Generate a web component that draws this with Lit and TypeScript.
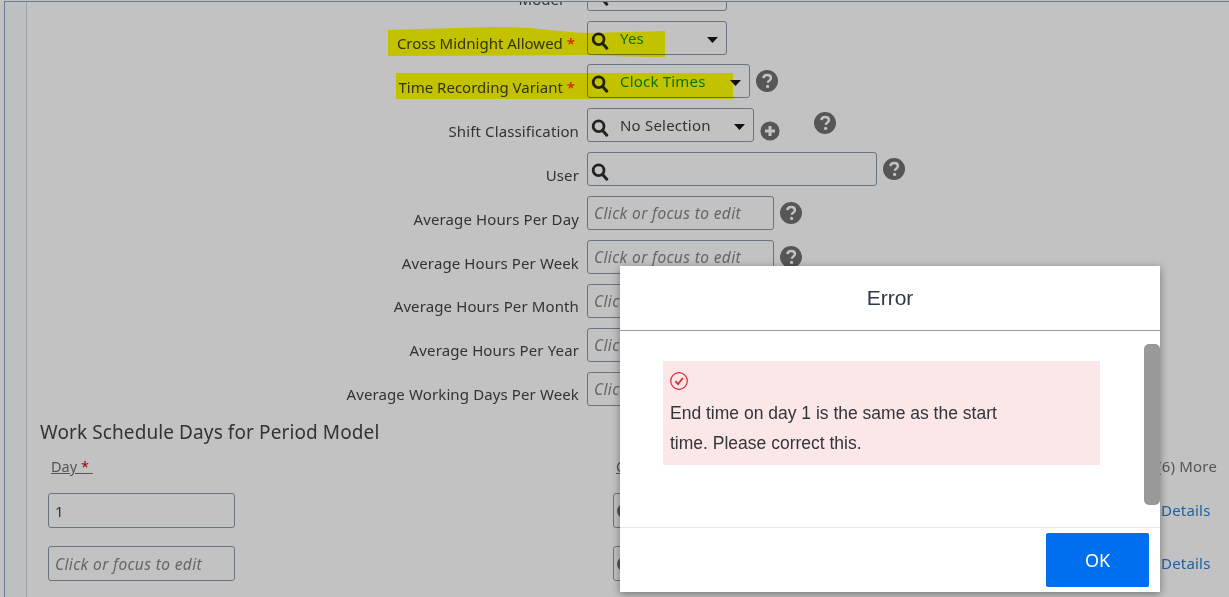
import { LitElement, html, css, svg } from "lit";
import { customElement } from "lit/decorators.js";

const search = html`<svg class="search" width="18" height="18" viewBox="0 0 18 18"><circle cx="7.6" cy="7.2" r="5.4" fill="none" stroke="#222" stroke-width="2.8"/><path d="M11.4 11.2l4.4 5" stroke="#222" stroke-width="3" stroke-linecap="round"/></svg>`;
const arrow = html`<svg class="arrow" width="11" height="6" viewBox="0 0 11 6"><path d="M0 0h11L5.5 6z" fill="#111"/></svg>`;
const help = html`<svg width="22" height="22" viewBox="0 0 22 22"><circle cx="11" cy="11" r="11" fill="#565656"/><path d="M7.4 8.2c.2-2.2 1.8-3.3 3.8-3.3 2.2 0 3.7 1.2 3.7 3 0 1.4-.8 2.1-1.8 2.8-.9.6-1.3 1-1.3 2" fill="none" stroke="#c2c2c2" stroke-width="2.5"/><circle cx="11.6" cy="16.4" r="1.6" fill="#c2c2c2"/></svg>`;
const plus = html`<svg width="20" height="20" viewBox="0 0 20 20"><circle cx="10" cy="10" r="9.6" fill="#565656"/><path d="M10 5v10M5 10h10" stroke="#c2c2c2" stroke-width="3"/></svg>`;

interface Row {
  label: string;
  req?: boolean;
  value?: string;
  width: number;
  select?: boolean;
  search?: boolean;
  green?: boolean;
  help?: boolean;
}

const rows: Row[] = [
  { label: "Model", req: true, width: 140, search: true },
  { label: "Cross Midnight Allowed", req: true, value: "Yes", width: 140, select: true, search: true, green: true },
  { label: "Time Recording Variant", req: true, value: "Clock Times", width: 163, select: true, search: true, green: true, help: true },
  { label: "Shift Classification", value: "No Selection", width: 167, select: true, search: true },
  { label: "User", width: 290, search: true, help: true },
  { label: "Average Hours Per Day", width: 187, help: true },
  { label: "Average Hours Per Week", width: 187, help: true },
  { label: "Average Hours Per Month", width: 187 },
  { label: "Average Hours Per Year", width: 187 },
  { label: "Average Working Days Per Week", width: 187 },
];

@customElement("app-root")
export class AppRoot extends LitElement {
  static styles = css`
    :host { display: block; width: 1229px; height: 597px; overflow: hidden; background: #c2c2c2; position: relative; font-family: "Noto Sans", sans-serif; color: #333; }
    .frame { margin: 1px 0 0 4px; height: 596px; box-sizing: border-box; border-top: 1px solid #6b7b8e; border-left: 1px solid #6b7b8e; display: flex; overflow: hidden; }
    .band { width: 21px; flex: none; background: #bcc0c0; border-right: 1px solid #a0a4a4; }
    .main { flex: 1; padding-left: 13px; }
    .form { margin: -25px 0 0 0; display: flex; flex-direction: column; gap: 10px; }
    .row { display: flex; height: 34px; align-items: flex-start; }
    .r1 { margin-bottom: -1px; }
    .label { width: 539px; flex: none; text-align: right; font-size: 15px; line-height: 20px; padding-top: 12px; box-sizing: border-box; white-space: nowrap; letter-spacing: 0.12px; }
    .req .label { padding-right: 4px; letter-spacing: 0; }
    .r2 .label, .r3 .label, .r4 .label, .r5 .label, .r6 .label { padding-top: 13px; }
    .star { color: #d80f0f; }
    .box { margin-left: 8px; height: 34px; box-sizing: border-box; border: 1px solid #6a7480; border-radius: 3px; display: flex; align-items: center; flex: none; position: relative; }
    .search { position: absolute; left: 3px; top: 10px; }
    .arrow { position: absolute; right: 8px; top: 15px; }
    .value { margin-left: 32px; font-size: 15px; margin-top: -1px; letter-spacing: 0.2px; }
    .green { color: #0d6f00; }
    .ph { margin-left: 6px; font-size: 15.5px; font-style: italic; color: #666; white-space: nowrap; letter-spacing: 0.37px; }
    .ico { margin-left: 6px; flex: none; display: flex; }
    .r2 .ico { margin: 6px 0 0 6px; }
    .r3 .ico1 { margin: 13px 0 0 6px; }
    .r3 .ico2 { margin: 4px 0 0 34px; }
    .r4 .ico { margin: 6px 0 0 6px; }
    .r5 .ico, .r6 .ico { margin: 6px 0 0 6px; }
    h2 { margin: 14px 0 0; font-size: 19px; line-height: 24px; font-weight: 400; letter-spacing: 0.1px; }
    .table { display: grid; grid-template-columns: 565px 548px 60px; margin: 12px 0 0 8px; row-gap: 18px; align-items: center; }
    .th { font-size: 14.5px; line-height: 20px; color: #555; height: 26px; margin-bottom: -7px; }
    .th u { margin-left: 3px; }
    .th u b { color: #8b0000; font-weight: 400; }
    .more { margin-left: -4px; white-space: nowrap; font-size: 15px; letter-spacing: 0.2px; color: #555; }
    .cell { width: 187px; height: 35px; box-sizing: border-box; border: 1px solid #6a7480; border-radius: 3px; display: flex; align-items: center; padding-left: 6px; font-size: 15px; }
    .cell .ph { margin: 0; }
    .cell2 { width: 100px; padding-left: 3px; }
    .dot { width: 14px; height: 14px; border-radius: 50%; background: #565656; }
    .link { color: #1f5fa8; font-size: 15px; letter-spacing: 0.2px; margin-top: -1px; }
    .hl { position: absolute; left: 0; top: 0; mix-blend-mode: multiply; pointer-events: none; }
    .modal { position: absolute; left: 620px; top: 266px; width: 540px; height: 326px; background: #fff; box-shadow: 0 2px 8px rgba(0,0,0,.4); display: flex; flex-direction: column; font-family: "Liberation Sans", Arial, sans-serif; color: #32363a; }
    .mhead { height: 65px; flex: none; box-sizing: border-box; border-bottom: 1px solid #999; display: flex; align-items: center; justify-content: center; font-size: 21px; color: #2c3a46; }
    .mbody { flex: 1; position: relative; padding: 30px 0 0 43px; }
    .msg { width: 437px; height: 104px; box-sizing: border-box; background: #fbe6e8; padding: 11px 7px; font-size: 17.5px; line-height: 30px; }
    .msg svg { display: block; margin-bottom: 8px; }
    .scroll { position: absolute; right: 0; top: 13px; width: 16px; height: 161px; border-radius: 5px; background: #999; }
    .mfoot { height: 65px; flex: none; box-sizing: border-box; border-top: 1px solid #e8e8e8; display: flex; justify-content: flex-end; padding: 5px 11px 5px 0; }
    .ok { width: 103px; height: 54px; border-radius: 2px; background: #006fef; color: #fff; display: flex; align-items: center; justify-content: center; font: 18px "Noto Sans", sans-serif; }
  `;

  private renderRow(r: Row, i: number) {
    return html`<div class="row r${i} ${r.req ? "req" : ""}">
      <div class="label">${r.label}${r.req ? html` <span class="star">*</span>` : ""}</div>
      <div class="box" style="width:${r.width}px">
        ${r.search ? search : ""}
        ${r.value ? html`<span class="value ${r.green ? "green" : ""}">${r.value}</span>` : ""}
        ${!r.search ? html`<span class="ph">Click or focus to edit</span>` : ""}
        ${r.select ? arrow : ""}
      </div>
      ${i === 3
        ? html`<span class="ico ico1">${plus}</span><span class="ico ico2">${help}</span>`
        : r.help
          ? html`<span class="ico">${help}</span>`
          : ""}
    </div>`;
  }

  render() {
    return html`
      <div class="frame">
        <div class="band"></div>
        <div class="main">
          <div class="form">${rows.map((r, i) => this.renderRow(r, i))}</div>
          <h2>Work Schedule Days for Period Model</h2>
          <div class="table">
            <div class="th"><u>Day <b>*</b>&nbsp;</u></div>
            <div class="th"><u>C</u></div>
            <div class="th more">(6) More</div>
            <div class="cell">1</div>
            <div class="cell cell2"><span class="dot"></span></div>
            <div class="link">Details</div>
            <div class="cell"><span class="ph">Click or focus to edit</span></div>
            <div class="cell cell2"><span class="dot"></span></div>
            <div class="link">Details</div>
          </div>
        </div>
      </div>
      <svg class="hl" width="1229" height="597">
        ${svg`<path d="M388 30 C430 29 470 27 510 27 C540 28 570 33 590 33 L665 31 L665 57 C630 57 610 56 588 55 L388 56 Z" fill="#ffff00"/>
        <rect x="396" y="73" width="337" height="26" fill="#ffff00"/>`}
      </svg>
      <div class="modal">
        <div class="mhead">Error</div>
        <div class="mbody">
          <div class="msg">
            <svg width="18" height="18" viewBox="0 0 18 18"><circle cx="9" cy="9" r="8.3" fill="none" stroke="#e0242c" stroke-width="1.2"/><path d="M5.4 9.2l2.6 3 4.8-6.2" fill="none" stroke="#e0242c" stroke-width="1.8"/></svg>
            End time on day 1 is the same as the start<br />time. Please correct this.
          </div>
          <div class="scroll"></div>
        </div>
        <div class="mfoot"><div class="ok">OK</div></div>
      </div>
    `;
  }
}
